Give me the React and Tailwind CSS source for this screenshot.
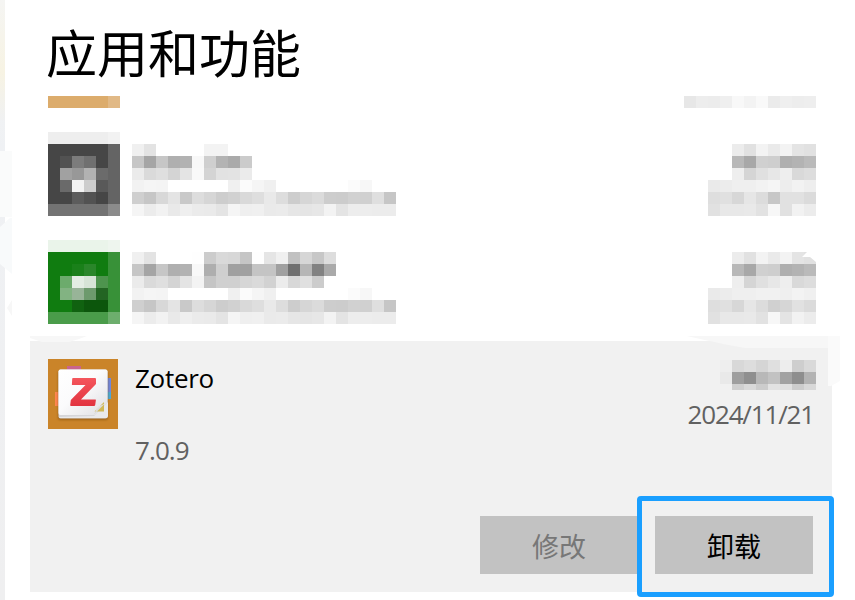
import React from "react";

const FONT = "font-['Open_Sans','Noto_Sans_CJK_SC',sans-serif]";

// Each row is a list of colours; two-digit entries are grey levels, ".." is empty, "v*n" repeats.
function parseRow(row) {
  return row.split(" ").flatMap((token) => {
    const [value, count] = token.split("*");
    return Array(Number(count || 1)).fill(value.length === 2 && value !== ".." ? value + value + value : value);
  });
}

function Mosaic({ rows, height, className = "" }) {
  const cells = rows.map(parseRow);
  const width = Math.max(...cells.map((r) => r.length)) * 12;
  const h = height || cells.length * 12;
  return (
    <svg width={width} height={h} viewBox={`0 0 ${width} ${h}`} shapeRendering="crispEdges" className={`block shrink-0 ${className}`}>
      {cells.map((r, y) =>
        r.map((c, x) => (c === ".." ? null : <rect key={`${x}-${y}`} x={x * 12} y={y * 12} width="12" height="12" fill={`#${c}`} />))
      )}
    </svg>
  );
}

const DARK_ICON = [
  "ee*5 f2",
  "46*5 64",
  "46 52 7c 70 46 64",
  "46 a1 98 b2 6b 64",
  "46 6a f3 cd 59 64",
  "46 46 5c 52 46 64",
  "73*5 8b",
];

const GREEN_ICON = [
  "eaf4ea*5 eef5ee",
  "107c10*5 389138",
  "107c10*2 1a801a 2a862a 107c10 389138",
  "107c10 6cab6c e3ede3 d6e4d6 4e944e 389138",
  "107c10 82b382 98b498 6d9a6d 236523 389138",
  "107c10*2 106210 0c560c*2 389138",
  "4a9c4a*5 6dae6d",
];

const PUBLISHER = [
  "f2 f5 f4 ..*5 f0 fb f5 f0 ..*6 fb f7 ..*2",
  "cf c6 d8 e4 c9 dd d6 cd d1 d9 de e9 dd cd d6 db cd cc d1 d0 df c6",
  "f5 ec f2 e9 ef eb ea e4 f5 ef f0 ea eb e6 e5 e7 f3 e4 ed ed ec ec",
];

const ITEMS = [
  {
    icon: DARK_ICON,
    name: ["f0 e3 ..*4 f3 f3 ..*2", "c6 a5 c6 af b2 f8 cf b3 aa cb", "eb da df d4 e4 f9 d4 e2 e3 eb"],
    meta: [
      "..*2 ec e1 f3 ea f3 e4 e1",
      "..*2 b8 a8 d0 ce af b3 ba",
      "..*2 ee d5 e0 e7 ee d9 dd",
      "ea ec ef ef f2 f5 ed f2 ee",
      "de e0 d7 e6 dc c7 e1 e1 db",
      "e1 e8 e8 e9 e2 f7 e1 f2 ec",
    ],
  },
  {
    icon: GREEN_ICON,
    name: [
      "f0 e3 ..*3 fe cc d9 d7 c5 fe e5 f0 c1 d6 c7 dd",
      "c6 a5 c6 af b2 f8 ae cf a0 a0 c4 c4 a0 70 b6 82 aa",
      "eb da df d4 e4 f3 c5 d0 d0 d6 da d2 ec d8 e0 cc",
    ],
    meta: [
      "..*2 ec e1 f3 ea f3 e4 e1",
      "..*2 b8 a8 d0 ce af b3 ba",
      "..*2 ee d5 e0 e7 ee d9 dd",
      "ea ec ef ef f1 f1 ef f3 f0",
      "de e0 d7 e6 dc d0 d6 e1 db",
      "e1 e8 e8 e9 e2 f7 e4 f2 ec",
    ],
  },
];

function AppRow({ item }) {
  return (
    <div className="flex h-[108px] items-start pr-[39px] pl-[43px]">
      <Mosaic rows={item.icon} />
      <div className="mt-3 ml-3 flex flex-col">
        <Mosaic rows={item.name} />
        <Mosaic rows={PUBLISHER} />
      </div>
      <Mosaic rows={item.meta} className="mt-3 ml-auto" />
    </div>
  );
}

function ZoteroIcon() {
  return (
    <svg width="70" height="70" viewBox="0 0 70 70" className="block shrink-0">
      <defs>
        <linearGradient id="paper" x1="0" y1="0" x2="1" y2="1">
          <stop offset="0" stopColor="#fff" />
          <stop offset=".45" stopColor="#fbfbfc" />
          <stop offset="1" stopColor="#dedee2" />
        </linearGradient>
        <linearGradient id="letter" x1="0" y1="0" x2="0" y2="1">
          <stop offset="0" stopColor="#f4555c" />
          <stop offset="1" stopColor="#e23440" />
        </linearGradient>
        <linearGradient id="curl" x1="0" y1="0" x2="1" y2="1">
          <stop offset=".2" stopColor="#fff" />
          <stop offset=".65" stopColor="#c9c9c6" />
        </linearGradient>
        <filter id="shade" x="-20%" y="-20%" width="140%" height="140%">
          <feGaussianBlur stdDeviation="1.2" />
        </filter>
      </defs>
      <rect width="70" height="70" fill="#ca8429" />
      <rect x="19" y="7" width="14" height="6" fill="#c9648c" />
      <rect x="7" y="33" width="6" height="14" fill="#ff8650" />
      <rect x="57" y="19" width="6" height="14" fill="#7187dc" />
      <rect x="57" y="33" width="6" height="7" fill="#4ba9d6" />
      <rect x="10" y="12" width="50" height="49" rx="2" fill="#7a4a0c" opacity=".55" filter="url(#shade)" />
      <rect x="10.5" y="10.5" width="49" height="49" rx="2" fill="#d6d6d9" />
      <path d="M12.5 10.5h45a2 2 0 0 1 2 2v31L47 56H12.500a2 2 0 0 1-2-2V12.500a2 2 0 0 1 2-2z" fill="url(#paper)" />
      <path d="M46 57l14-14V57a2 2 0 0 1-2 2H12l-1-1z" fill="#e9e9eb" />
      <path d="M46.500 52.500L56 43v9.500z" fill="#d0b956" />
      <path d="M44 56c4-1 4-5 4.500-8.500C52 47 56 46 59.500 42L46.500 55z" fill="url(#curl)" />
      <path d="M25 19h22q1 0 1 1v5L33 40.500H47.500q.5 0 .4.600L47.200 46q-.2 1-1.200 1H23q-1 0-.8-1l.6-5L37.500 26H24.300q-.5 0-.4-.600L24.200 20q0-1 .8-1z" fill="url(#letter)" />
    </svg>
  );
}

export default function App() {
  return (
    <div className={`relative flex h-[600px] w-[855px] overflow-hidden bg-white ${FONT}`}>
      <div className="w-[5px] shrink-0 bg-linear-to-b from-[#f5f5f3] via-[#eff1f4] via-25% to-[#efeff0]">
        <div className="h-[120px] bg-linear-to-b from-[#f5f5f3] via-[#f7f3e3] via-60% to-[#f0f1f2]" />
      </div>
      <main className="flex w-[850px] flex-col">
        <h1 className="h-24 pt-[13px] pl-[41px] font-['Noto_Sans_CJK_SC',sans-serif] text-[51px] leading-[76px] font-normal text-black">应用和功能</h1>
        <div className="flex h-9 items-start justify-between pr-[39px] pl-[43px]">
          <Mosaic rows={["dcac6c*5 e1b986"]} />
          <Mosaic rows={["e7 ed ec ef f8 f3 f9 eb ef ed ee"]} />
        </div>
        {ITEMS.map((item, i) => (
          <AppRow key={i} item={item} />
        ))}
        <section className="-mt-[7px] ml-[25px] flex h-[251px] w-[802px] flex-col justify-between bg-[#f1f1f1] pt-[18px] pr-[19px] pb-[18px] pl-[18px]">
          <div className="flex items-start">
            <ZoteroIcon />
            <div className="ml-[17px] flex flex-col">
              <span className="mt-px text-[26px] leading-9 tracking-[-0.3px] text-black">Zotero</span>
              <span className="mt-9 text-[26px] leading-9 tracking-[-0.9px] text-[#616161]">7.0.9</span>
            </div>
            <div className="-mr-[3px] ml-auto flex flex-col items-end pt-px">
              <Mosaic
                height={30}
                rows={["ee d8 dd d5 df ed ce d9", "e9 9e 8f b8 c2 a2 8e b3", ".. cf d9 cc e2 e0 cc d8"]}
              />
              <span className="mt-[6px] mr-[2px] text-[26px] leading-9 tracking-[-1.15px] text-[#616161]">2024/11/21</span>
            </div>
          </div>
          <div className="flex justify-end gap-[17px]">
            <button className="h-[58px] w-[158px] bg-[#c2c2c2] pt-1 text-[27px] text-[#777]">修改</button>
            <div className="relative">
              <button className="h-[58px] w-[158px] bg-[#c2c2c2] pt-1 text-[27px] text-black">卸载</button>
              <span className="absolute -top-5 -left-[18px] h-[101px] w-[197px] rounded-[4px] border-5 border-[#1a9fff]" />
            </div>
          </div>
        </section>
      </main>
      <svg className="pointer-events-none absolute inset-0" width="855" height="600" viewBox="0 0 855 600">
        <path d="M0 151h12v66H0z" fill="#fafbfb" />
        <path d="M0 227l10-9h2v56L0 264z" fill="#f8fafb" />
        <path d="M12 300v16l-5-8z" fill="#f7f7f7" />
        <path d="M30 336h57l-8 3-10 3H42l-12-4z" fill="#f7f7f7" />
        <path d="M687 336h141v12h-83l-22-4z" fill="#f7f7f7" />
        <path d="M828 336h12v45l-9 5h-3z" fill="#fafafa" />
        <path d="M807 252h9v10l-6-5h-8z" fill="#fff" />
      </svg>
    </div>
  );
}
